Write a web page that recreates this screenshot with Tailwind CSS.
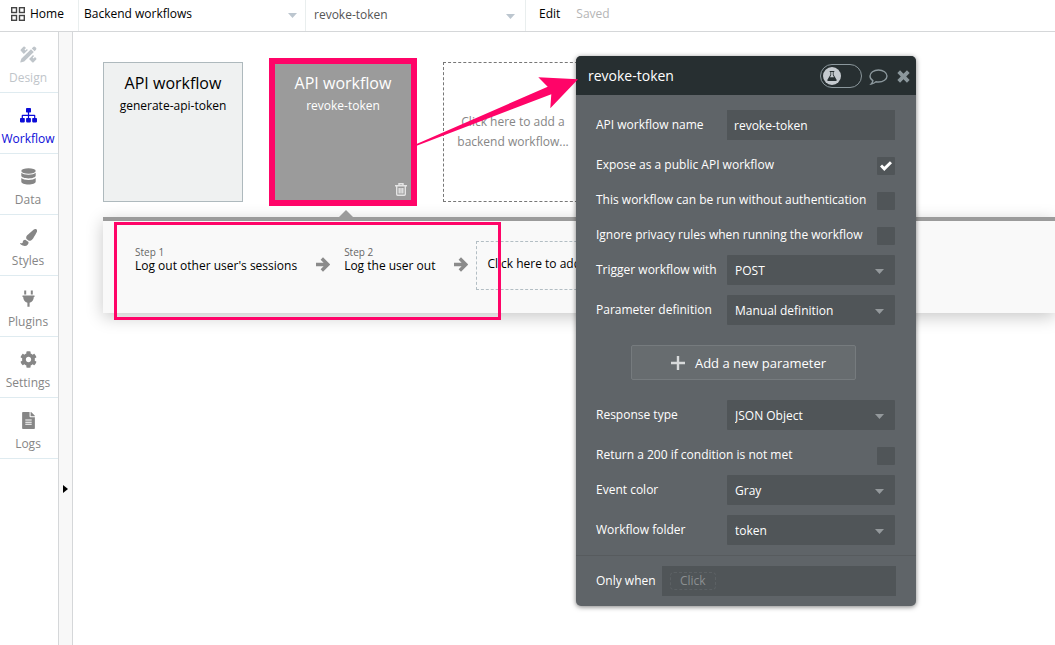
<!DOCTYPE html>
<html lang="en">
<head>
  <meta charset="UTF-8" />
  <meta name="viewport" content="width=device-width, initial-scale=1.0" />
  <title>Backend workflows</title>
  <script src="https://cdn.jsdelivr.net/npm/@tailwindcss/browser@4"></script>
</head>
<body class="relative flex flex-col min-h-screen overflow-x-hidden bg-white text-black text-xs leading-5 font-['Open_Sans',sans-serif]">

  <!-- top bar -->
  <header class="flex h-8 border-b border-[#d5d7d9]">
    <a href="#" class="flex items-center gap-[5px] w-[79px] pl-[11px] pb-1 border-r border-[#e9eeee]">
      <svg class="size-3.5" viewBox="0 0 14 14" fill="none" stroke="#444" stroke-width="1.4">
        <rect x=".7" y=".7" width="4.8" height="4.8" />
        <rect x="8.5" y=".7" width="4.8" height="4.8" />
        <rect x=".7" y="8.5" width="4.8" height="4.8" />
        <rect x="8.5" y="8.5" width="4.8" height="4.8" />
      </svg>
      Home
    </a>
    <div class="relative w-[227px] border-r border-[#e9eeee]">
      <select aria-label="Page" class="appearance-none w-full h-7 pl-[5px] pr-6 bg-transparent">
        <option>Backend workflows</option>
      </select>
      <svg class="absolute right-2 top-[13px] w-[9px] h-[5px] pointer-events-none" viewBox="0 0 9 5" fill="#bcc6cf"><path d="M0 0h9L4.5 5z" /></svg>
    </div>
    <div class="relative w-[220px] border-r border-[#e9eeee]">
      <select aria-label="Workflow" class="appearance-none w-full h-[30px] pl-2 pr-6 bg-transparent text-[#555]">
        <option>revoke-token</option>
      </select>
      <svg class="absolute right-2.5 top-3.5 w-[9px] h-[5px] pointer-events-none" viewBox="0 0 9 5" fill="#bcc6cf"><path d="M0 0h9L4.5 5z" /></svg>
    </div>
    <div class="flex items-center gap-4 pl-[13px] pb-1">
      <button type="button">Edit</button>
      <span class="text-[#b5b5b5]">Saved</span>
    </div>
  </header>

  <div class="flex flex-1">
    <!-- tabs -->
    <nav class="w-[59px] shrink-0 border-r border-[#d5d7d9] text-[#868686]">
      <a href="#" class="flex flex-col items-center h-[61px] pt-3.5 pr-0.5 gap-[5px] border-b border-[#dfebf0] text-[#bfc5ca]">
        <svg class="size-[17px] shrink-0" viewBox="0 0 17 17" fill="currentColor">
          <path d="M.8 3.4 3.400.8q.7-.6 1.400 0L6 2 4.500 3.500l.9.9L6.900 2.900l1 1-4.100 4.100L.8 4.800q-.6-.7 0-1.400z" />
          <path d="M9.100 12.900 13 9l1.100 1.100-1.500 1.500.9.9 1.500-1.500 1.200 1.200q.6.700 0 1.400l-2.600 2.600q-.7.6-1.400 0z" />
          <path d="M11 3.200 13.800 6 4.200 15.600.6 16.500q-.4 0-.3-.4L1.300 12.800z" />
          <path d="M11.800 2.400 13.200 1q1-.9 2 0l.8.8q.9 1 0 2L14.600 5.200z" />
        </svg>
        Design
      </a>
      <a href="#" class="flex flex-col items-center h-[61px] pt-3.5 pr-0.5 gap-[5px] border-b border-[#dfebf0] text-[#0c0cd8]">
        <svg class="size-[17px] shrink-0" viewBox="0 0 17 17" fill="currentColor">
          <rect x="6" y="1" width="5" height="4.6" rx=".8" />
          <rect x="0" y="11" width="4.8" height="4.4" rx=".8" />
          <rect x="6.1" y="11" width="4.8" height="4.4" rx=".8" />
          <rect x="12.2" y="11" width="4.8" height="4.4" rx=".8" />
          <path d="M7.9 5h1.2v2.7h5.300q.9 0 .9.9v2.900h-1.200V8.900H9.100v2.600H7.900V8.900H2.900v2.600H1.700V8.600q0-.9.9-.9h5.300z" />
        </svg>
        Workflow
      </a>
      <a href="#" class="flex flex-col items-center h-[61px] pt-3.5 pr-0.5 gap-[5px] border-b border-[#dfebf0]">
        <svg class="size-[17px] shrink-0" viewBox="0 0 17 17" fill="currentColor">
          <ellipse cx="8.5" cy="3" rx="7.2" ry="2.7" />
          <path d="M1.300 4.800c1.200 1.300 4 1.900 7.200 1.900s6-.6 7.200-1.900v3c0 1.500-3.200 2.600-7.200 2.600S1.300 9.300 1.300 7.800z" />
          <path d="M1.300 10c1.200 1.300 4 1.900 7.200 1.900s6-.6 7.200-1.900v3.700c0 1.500-3.200 2.700-7.200 2.700s-7.200-1.200-7.200-2.700z" />
        </svg>
        Data
      </a>
      <a href="#" class="flex flex-col items-center h-[61px] pt-3.5 pr-0.5 gap-[5px] border-b border-[#dfebf0]">
        <svg class="size-[17px] shrink-0" viewBox="0 0 512 512" fill="currentColor">
          <path d="M457 0c-15 0-30 7-41 17-204 182-229 188-229 244 0 14 3 28 9 41l70 52c7 2 15 3 23 3 62 0 98-46 213-261 8-15 14-31 14-47 0-29-28-49-59-49zM160 320c-53 1-79 36-80 93-15 13-45 26-63 13-7-5-17-2-17 6 0 20 50 80 144 80 77 0 113-50 113-111v-8z" />
        </svg>
        Styles
      </a>
      <a href="#" class="flex flex-col items-center h-[61px] pt-3.5 pr-0.5 gap-[5px] border-b border-[#dfebf0]">
        <svg class="size-[17px] shrink-0" viewBox="0 0 17 17" fill="currentColor">
          <path d="M4.200.4h2v4.200h-2zM10.800.4h2v4.200h-2zM2.500 5.600h12v1.500h-.7c0 3-1.700 5-4.200 5.600v4H7.400v-4C4.900 12.100 3.200 10.100 3.200 7.100h-.7z" />
        </svg>
        Plugins
      </a>
      <a href="#" class="flex flex-col items-center h-[61px] pt-3.5 pr-0.5 gap-[5px] border-b border-[#dfebf0]">
        <svg class="size-[17px] shrink-0" viewBox="0 0 512 512" fill="currentColor">
          <path d="M487 315.700l-42.600-24.600c4.300-23.200 4.300-47 0-70.200l42.600-24.600c4.900-2.800 7.100-8.600 5.500-14-11.100-35.600-30-67.800-54.700-94.600-3.800-4.100-10-5.100-14.800-2.300L380.400 110c-17.900-15.400-38.500-27.300-60.800-35.100V25.800c0-5.600-3.900-10.500-9.400-11.700-36.700-8.200-74.300-7.800-109.200 0-5.500 1.200-9.400 6.100-9.400 11.700V75c-22.200 7.900-42.800 19.800-60.800 35.100L88.300 85.500c-4.900-2.800-11-1.900-14.800 2.300-24.700 26.700-43.600 58.900-54.700 94.600-1.700 5.400.6 11.200 5.500 14L66.900 221c-4.300 23.200-4.300 47 0 70.200l-42.600 24.600c-4.900 2.800-7.100 8.600-5.500 14 11.100 35.600 30 67.800 54.700 94.600 3.800 4.100 10 5.100 14.800 2.300l42.600-24.600c17.900 15.400 38.500 27.300 60.800 35.100v49.200c0 5.600 3.900 10.500 9.400 11.700 36.700 8.200 74.300 7.800 109.200 0 5.500-1.200 9.400-6.100 9.400-11.700v-49.200c22.200-7.900 42.800-19.800 60.800-35.100l42.600 24.600c4.900 2.800 11 1.900 14.800-2.300 24.700-26.700 43.600-58.900 54.700-94.600 1.500-5.500-.7-11.300-5.600-14.100zM256 336c-44.100 0-80-35.900-80-80s35.900-80 80-80 80 35.900 80 80-35.900 80-80 80z" />
        </svg>
        Settings
      </a>
      <a href="#" class="flex flex-col items-center h-[61px] pt-3.5 pr-0.5 gap-[5px] border-b border-[#dfebf0]">
        <svg class="size-[17px] shrink-0" viewBox="0 0 384 512" fill="currentColor">
          <path d="M224 136V0H24C10.700 0 0 10.700 0 24v464c0 13.300 10.700 24 24 24h336c13.300 0 24-10.700 24-24V160H248c-13.200 0-24-10.800-24-24zm64 248H96v-28h192zm0-64H96v-28h192zm0-64H96v-28h192zM384 122v6H256V0h6c6.400 0 12.500 2.500 17 7l98 98c4.500 4.500 7 10.600 7 17z" />
        </svg>
        Logs
      </a>
    </nav>

    <!-- collapsed drawer -->
    <div class="w-3.5 shrink-0 border-r border-[#d5d7d9] bg-[#f8f8f8]">
      <button type="button" aria-label="Expand" class="block mt-[453px] ml-1">
        <svg class="w-[5px] h-2" viewBox="0 0 5 8"><path d="M0 0v8l5-4z" /></svg>
      </button>
    </div>

    <!-- canvas -->
    <main class="flex-1 min-w-0 pt-[30px] pl-[30px]">
      <div class="flex gap-[30px] text-center">
        <div class="size-[140px] pt-2.5 border border-[#aeb9bd] bg-[#eff1f1]">
          <h2 class="text-base leading-5">API workflow</h2>
          <p class="mt-[3px]">generate-api-token</p>
        </div>
        <div class="relative size-[140px] pt-[11px] bg-[#9b9b9b] text-white">
          <h2 class="text-base leading-5">API workflow</h2>
          <p class="mt-[3px]">revoke-token</p>
          <button type="button" aria-label="Delete" class="absolute right-1.5 bottom-1.5">
            <svg class="w-3 h-[13px]" viewBox="0 0 12 13" fill="none" stroke="#e4e4e4" stroke-width="1.4">
              <path d="M0 2.700h12M4 2.500V.7h4v1.800M1.700 3v8.300q0 1 1 1h6.600q1 0 1-1V3M4.200 5v5.500M6 5v5.500M7.800 5v5.500" />
            </svg>
          </button>
          <svg class="absolute left-[66px] top-[148px] w-3.5 h-[7px]" viewBox="0 0 14 7" fill="#9b9b9b"><path d="M7 0l7 7H0z" /></svg>
        </div>
        <button type="button" class="size-[140px] px-2 border border-dashed border-[#777] leading-5 text-[#868686]">Click here to add a backend workflow...</button>
      </div>

      <div class="flex items-start h-24 mt-[15px] pt-5 pl-8 border-t-4 border-[#9b9b9b] bg-[#f9f9f9] shadow-[0_4px_16px_rgba(0,0,0,0.22)]">
        <div class="pt-[5px]">
          <p class="text-[10px] leading-3 text-[#666]">Step 1</p>
          <p class="leading-4 whitespace-nowrap">Log out other user's sessions</p>
        </div>
        <svg class="w-3.5 h-[15px] shrink-0 mt-4 ml-[19px] mr-3.5" viewBox="0 0 14 15" fill="none" stroke="#8b8b8b" stroke-width="3.4"><path d="M0 7.500h11.500M5.800 1.500l6 6-6 6" /></svg>
        <div class="pt-[5px]">
          <p class="text-[10px] leading-3 text-[#666]">Step 2</p>
          <p class="leading-4 whitespace-nowrap">Log the user out</p>
        </div>
        <svg class="w-3.5 h-[15px] shrink-0 mt-4 ml-[19px] mr-2" viewBox="0 0 14 15" fill="none" stroke="#8b8b8b" stroke-width="3.4"><path d="M0 7.500h11.500M5.800 1.500l6 6-6 6" /></svg>
        <button type="button" class="h-[49px] px-2.5 pb-1 border border-dashed border-[#b3bec4] whitespace-nowrap">Click here to add</button>
      </div>
    </main>
  </div>

  <!-- property editor -->
  <section class="absolute left-[576px] top-14 w-[340px] rounded-[5px] overflow-hidden bg-[#5f6468] text-white shadow-[0_1px_5px_rgba(0,0,0,0.5)]">
    <div class="flex items-center h-[39px] pl-3 pr-1.5 bg-[#272f31]">
      <h2 class="flex-1 text-sm">revoke-token</h2>
      <button type="button" aria-label="Experiment" class="flex items-center w-[42px] h-6 pl-0.5 border border-[#8b979c] rounded-full">
        <span class="flex items-center justify-center size-[18px] rounded-full bg-[#c5cacf]">
          <svg class="size-2.5" viewBox="0 0 10 10" fill="#272f31"><path d="M2.700 0h4.600v1H6.600v2.800L9.600 8.800Q9.900 10 9 10H1Q.1 10 .4 8.800l3-5V1h-.7zM4.200 1v3L3 6.200h4L5.800 4V1z" /></svg>
        </span>
      </button>
      <button type="button" aria-label="Comment" class="pt-0.5 ml-[7px]">
        <svg class="w-[19px] h-4" viewBox="0 0 19 16" fill="none" stroke="#8b979c" stroke-width="1.4"><path d="M9.500 1c4.700 0 8.500 2.600 8.500 6s-3.800 6-8.500 6q-1.300 0-2.500-.2Q4.800 14.700 2.200 15q1.500-1.500 1.700-3.300C2.100 10.600 1 8.900 1 7c0-3.400 3.800-6 8.500-6z" /></svg>
      </button>
      <button type="button" aria-label="Close" class="pt-0.5 ml-[9px]">
        <svg class="size-[13px]" viewBox="0 0 13 13" stroke="#8b979c" stroke-width="3.8"><path d="M1.700 1.700l9.600 9.600M11.300 1.700l-9.600 9.600" /></svg>
      </button>
    </div>

    <form class="flex flex-col gap-2.5 pt-[15px] pb-2.5 pl-5 pr-[21px]">
      <div class="flex items-center justify-between h-[30px]">
        <label for="name">API workflow name</label>
        <input id="name" type="text" value="revoke-token" class="w-[168px] h-[30px] px-[7px] pt-px bg-[#505558]" />
      </div>
      <div class="flex items-end justify-between h-[25px]">
        <label for="public">Expose as a public API workflow</label>
        <div class="relative size-[18px]">
          <input id="public" type="checkbox" checked class="peer block appearance-none size-[18px] rounded-[1px] bg-[#505558]" />
          <svg class="absolute left-[3px] top-1 w-3 h-2.5 hidden peer-checked:block pointer-events-none" viewBox="0 0 12 10" fill="none" stroke="#fff" stroke-width="3"><path d="M1 4.500l3.300 3.300L11 1.200" /></svg>
        </div>
      </div>
      <div class="flex items-end justify-between h-[25px]">
        <label for="noauth">This workflow can be run without authentication</label>
        <input id="noauth" type="checkbox" class="appearance-none size-[18px] rounded-[1px] bg-[#505558]" />
      </div>
      <div class="flex items-end justify-between h-[25px]">
        <label for="privacy">Ignore privacy rules when running the workflow</label>
        <input id="privacy" type="checkbox" class="appearance-none size-[18px] rounded-[1px] bg-[#505558]" />
      </div>
      <div class="flex items-center justify-between h-[30px]">
        <label for="trigger">Trigger workflow with</label>
        <div class="relative w-[168px]">
          <select id="trigger" class="block appearance-none w-full h-[30px] px-2 pt-0.5 rounded-[1px] bg-[#505558]"><option>POST</option></select>
          <svg class="absolute right-[11px] top-3.5 w-[9px] h-[5px] pointer-events-none" viewBox="0 0 9 5" fill="#94999c"><path d="M0 0h9L4.5 5z" /></svg>
        </div>
      </div>
      <div class="flex items-center justify-between h-[30px]">
        <label for="params">Parameter definition</label>
        <div class="relative w-[168px]">
          <select id="params" class="block appearance-none w-full h-[30px] px-2 pt-0.5 rounded-[1px] bg-[#505558]"><option>Manual definition</option></select>
          <svg class="absolute right-[11px] top-3.5 w-[9px] h-[5px] pointer-events-none" viewBox="0 0 9 5" fill="#94999c"><path d="M0 0h9L4.5 5z" /></svg>
        </div>
      </div>
      <button type="button" class="flex items-center justify-center gap-2.5 w-[225px] h-[35px] my-2.5 ml-[35px] pl-2.5 border border-[#767b7e] rounded-[2px] bg-[#676c6f] text-[13px]">
        <svg class="size-3.5" viewBox="0 0 14 14" stroke="#d8dadb" stroke-width="2.4"><path d="M7 0v14M0 7h14" /></svg>
        Add a new parameter
      </button>
      <div class="flex items-center justify-between h-[30px]">
        <label for="response">Response type</label>
        <div class="relative w-[168px]">
          <select id="response" class="block appearance-none w-full h-[30px] px-2 pt-0.5 rounded-[1px] bg-[#505558]"><option>JSON Object</option></select>
          <svg class="absolute right-[11px] top-3.5 w-[9px] h-[5px] pointer-events-none" viewBox="0 0 9 5" fill="#94999c"><path d="M0 0h9L4.5 5z" /></svg>
        </div>
      </div>
      <div class="flex items-end justify-between h-[25px]">
        <label for="return200">Return a 200 if condition is not met</label>
        <input id="return200" type="checkbox" class="appearance-none size-[18px] rounded-[1px] bg-[#505558]" />
      </div>
      <div class="flex items-center justify-between h-[30px]">
        <label for="color">Event color</label>
        <div class="relative w-[168px]">
          <select id="color" class="block appearance-none w-full h-[30px] px-2 pt-0.5 rounded-[1px] bg-[#505558]"><option>Gray</option></select>
          <svg class="absolute right-[11px] top-3.5 w-[9px] h-[5px] pointer-events-none" viewBox="0 0 9 5" fill="#94999c"><path d="M0 0h9L4.5 5z" /></svg>
        </div>
      </div>
      <div class="flex items-center justify-between h-[30px]">
        <label for="folder">Workflow folder</label>
        <div class="relative w-[168px]">
          <select id="folder" class="block appearance-none w-full h-[30px] px-2 pt-0.5 rounded-[1px] bg-[#505558]"><option>token</option></select>
          <svg class="absolute right-[11px] top-3.5 w-[9px] h-[5px] pointer-events-none" viewBox="0 0 9 5" fill="#94999c"><path d="M0 0h9L4.5 5z" /></svg>
        </div>
      </div>
    </form>

    <div class="flex items-center justify-between py-2.5 px-5 border-t border-[#575b5e]">
      <span>Only when</span>
      <div class="flex items-center w-[234px] h-[30px] px-2 bg-[#505558]">
        <button type="button" class="h-[18px] px-[9px] leading-4 border border-dashed border-[#5c6164] rounded-[4px] text-[#8b8f91]">Click</button>
      </div>
    </div>
  </section>

  <!-- callouts -->
  <div class="absolute left-[269px] top-[58px] size-[148px] border-6 border-[#ff0468] pointer-events-none"></div>
  <div class="absolute left-[114px] top-[222px] w-[387px] h-[98px] border-3 border-[#ff0468] pointer-events-none"></div>
  <svg class="absolute left-[415px] top-[76px] w-[164px] h-[72px] pointer-events-none" viewBox="0 0 164 72" fill="#ff0468">
    <path d="M163 3.300 123.300 1.300 132.700 10.700 1 68.300V70L136.300 18.300 135.300 32.300z" />
  </svg>
</body>
</html>
